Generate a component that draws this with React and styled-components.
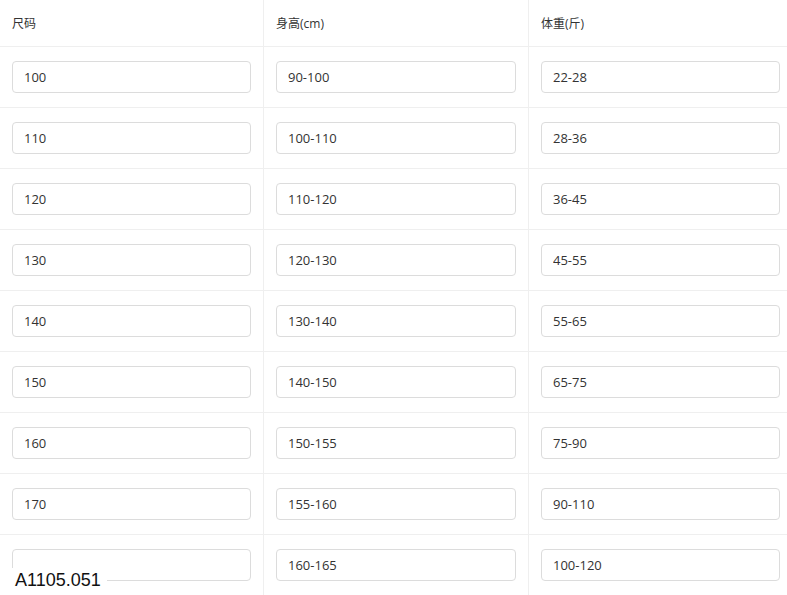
import React from "react"
import styled, { createGlobalStyle } from "styled-components"

const rows = [
  ["100", "90-100", "22-28"],
  ["110", "100-110", "28-36"],
  ["120", "110-120", "36-45"],
  ["130", "120-130", "45-55"],
  ["140", "130-140", "55-65"],
  ["150", "140-150", "65-75"],
  ["160", "150-155", "75-90"],
  ["170", "155-160", "90-110"],
  ["", "160-165", "100-120"],
]

const GlobalStyle = createGlobalStyle`
  html, body {
    margin: 0;
    padding: 0;
    background: #fff;
    overflow: hidden;
  }
  body {
    font-family: "Open Sans", "Noto Sans CJK SC", sans-serif;
  }
`

const Page = styled.div`
  position: relative;
  width: 787px;
  height: 595px;
  overflow: hidden;
`

const Table = styled.div`
  display: grid;
  grid-template-columns: 264px 265px 263px;
  width: 792px;
`

const HeadCell = styled.div`
  height: 46px;
  padding: 0 12px;
  display: flex;
  align-items: center;
  font-size: 12px;
  color: #333;
  border-bottom: 1px solid #efefef;
  border-right: ${(p) => (p.$last ? "none" : "1px solid #efefef")};
`

const Cell = styled.div`
  padding: 14px 12px;
  border-bottom: 1px solid #efefef;
  border-right: ${(p) => (p.$last ? "none" : "1px solid #efefef")};
`

const Field = styled.input`
  box-sizing: border-box;
  display: block;
  width: 100%;
  height: 32px;
  padding: 0 11px;
  border: 1px solid #dcdcdc;
  border-radius: 4px;
  background: #fff;
  font-family: "Open Sans", sans-serif;
  font-size: 13px;
  color: #333;
  outline: none;
`

const Mark = styled.div`
  position: absolute;
  left: 10px;
  bottom: 0;
  padding: 0 6px 0 5px;
  height: 27px;
  line-height: 25px;
  background: #fff;
  font-family: "Liberation Sans", Arial, sans-serif;
  font-size: 18px;
  color: #111;
`

export default function App() {
  return (
    <Page>
      <GlobalStyle />
      <Table>
        <HeadCell>尺码</HeadCell>
        <HeadCell>身高(cm)</HeadCell>
        <HeadCell $last>体重(斤)</HeadCell>
        {rows.map((r, i) => (
          <React.Fragment key={i}>
            <Cell>
              <Field defaultValue={r[0]} />
            </Cell>
            <Cell>
              <Field defaultValue={r[1]} />
            </Cell>
            <Cell $last>
              <Field defaultValue={r[2]} />
            </Cell>
          </React.Fragment>
        ))}
      </Table>
      <Mark>A1105.051</Mark>
    </Page>
  )
}
